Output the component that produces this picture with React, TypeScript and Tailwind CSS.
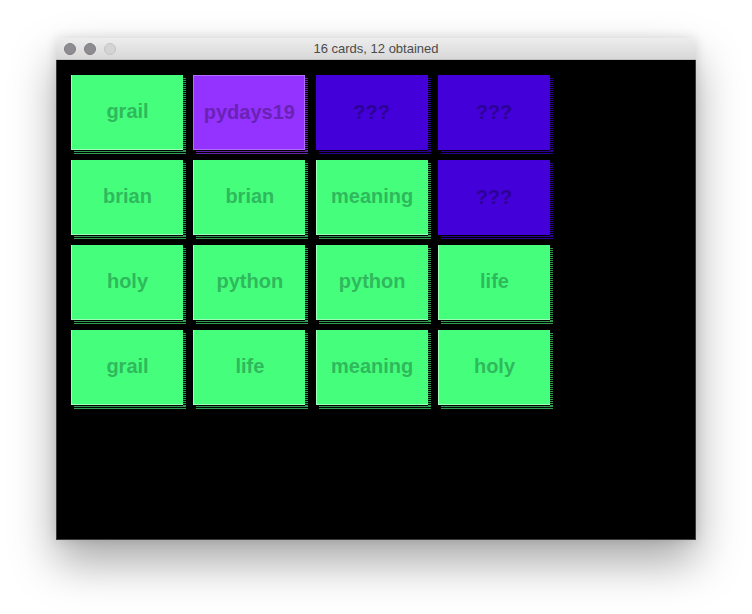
import React from "react";

type Card = { label: string; kind: "green" | "purple" | "blue" };

const cards: Card[] = [
  { label: "grail", kind: "green" },
  { label: "pydays19", kind: "purple" },
  { label: "???", kind: "blue" },
  { label: "???", kind: "blue" },
  { label: "brian", kind: "green" },
  { label: "brian", kind: "green" },
  { label: "meaning", kind: "green" },
  { label: "???", kind: "blue" },
  { label: "holy", kind: "green" },
  { label: "python", kind: "green" },
  { label: "python", kind: "green" },
  { label: "life", kind: "green" },
  { label: "grail", kind: "green" },
  { label: "life", kind: "green" },
  { label: "meaning", kind: "green" },
  { label: "holy", kind: "green" },
];

function CardView({ card }: { card: Card }) {
  const face =
    card.kind === "green"
      ? "bg-[#45ff7c] text-[#2fb95c] border-l border-b border-[#9dffb8]"
      : card.kind === "purple"
      ? "bg-[#9433ff] text-[#6a22b5] border border-[#b36dff]"
      : "bg-[#4400d8] text-[#2d0095]";
  const sideShadow =
    card.kind === "green"
      ? "bg-[repeating-linear-gradient(to_bottom,#2e9d50_0px,#2e9d50_1px,transparent_1px,transparent_2px)]"
      : card.kind === "purple"
      ? "bg-[repeating-linear-gradient(to_bottom,#6324a8_0px,#6324a8_1px,transparent_1px,transparent_2px)]"
      : "bg-[repeating-linear-gradient(to_bottom,#2c0090_0px,#2c0090_1px,transparent_1px,transparent_2px)]";
  const bottomShadow =
    card.kind === "green"
      ? "border-t border-b border-[#2e9d50]"
      : card.kind === "purple"
      ? "border-t border-b border-[#6324a8]"
      : "border-t border-b border-[#2c0090]";
  return (
    <div className="relative w-[112px] h-[75px]">
      <div className={`absolute left-[112px] top-[3px] w-[3px] h-[73px] ${sideShadow}`} />
      <div className={`absolute left-[3px] top-[76px] w-[112px] h-[3px] ${bottomShadow}`} />
      <div
        className={`relative w-full h-full flex items-center justify-center pb-[2px] text-[20px] font-bold ${face}`}
        style={{ fontFamily: '"Liberation Sans", Arial, sans-serif' }}
      >
        {card.label}
      </div>
    </div>
  );
}

export default function App() {
  return (
    <div className="w-[752px] h-[614px] bg-white pl-[56px] pt-[38px]">
      <div className="w-[640px] rounded-t-[5px] shadow-[0_22px_45px_rgba(0,0,0,0.35),0_0_12px_rgba(0,0,0,0.12)]">
        <div className="relative h-[22px] rounded-t-[5px] bg-[linear-gradient(to_bottom,#ededed,#d8d8d8)] border-b border-[#c2c2c2] flex items-center">
          <div className="flex items-center gap-[8px] pl-[8px]">
            <div className="w-[12px] h-[12px] rounded-full bg-[#8e8c91] border border-[#7f7d82]" />
            <div className="w-[12px] h-[12px] rounded-full bg-[#8e8c91] border border-[#7f7d82]" />
            <div className="w-[12px] h-[12px] rounded-full bg-[#d4d4d4] border border-[#c4c4c4]" />
          </div>
          <div
            className="absolute inset-0 flex items-center justify-center text-[13px] text-[#4b4b4b]"
            style={{ fontFamily: '"Liberation Sans", Arial, sans-serif' }}
          >
            16 cards, 12 obtained
          </div>
        </div>
        <div className="h-[480px] bg-black pl-[15px] pt-[15px] border-x border-b border-[#3a3a3a]">
          <div className="grid grid-cols-[repeat(4,122.33px)] auto-rows-[85px] -ml-[1px]">
            {cards.map((c, i) => (
              <CardView key={i} card={c} />
            ))}
          </div>
        </div>
      </div>
    </div>
  );
}
